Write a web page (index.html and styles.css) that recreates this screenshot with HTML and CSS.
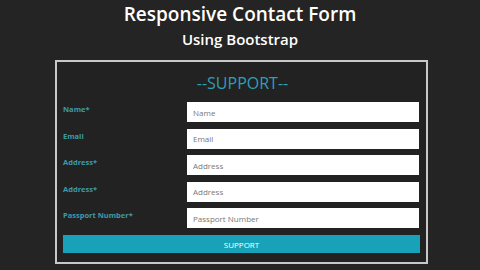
FILE: index.html
```html
<!DOCTYPE html>
<html lang="en">
<head>
    <meta charset="UTF-8">
    <meta name="viewport" content="width=device-width, initial-scale=1.0">
    <title>Responsive Contact Form</title>
    <link rel="stylesheet" href="styles.css">
</head>
<body>
    <div class="header">
        <h1>Responsive Contact Form</h1>
        <h2>Using Bootstrap</h2>
    </div>
    <div class="container">
        <h3>--SUPPORT--</h3>
        <form id="supportForm">
            <div class="row">
                <label for="name">Name*</label>
                <input type="text" id="name" placeholder="Name">
            </div>
            <div class="row">
                <label for="email">Email</label>
                <input type="text" id="email" placeholder="Email">
            </div>
            <div class="row">
                <label for="address1">Address*</label>
                <input type="text" id="address1" placeholder="Address">
            </div>
            <div class="row">
                <label for="address2">Address*</label>
                <input type="text" id="address2" placeholder="Address">
            </div>
            <div class="row">
                <label for="passport">Passport Number*</label>
                <input type="text" id="passport" placeholder="Passport Number">
            </div>
            <button type="submit">SUPPORT</button>
        </form>
    </div>
</body>
</html>
```

FILE: styles.css
```css
body {
    font-family: "Open Sans", "Noto Sans", sans-serif;
    margin: 0;
    padding: 0;
    background-color: #242424;
}

.header {
    text-align: center;
    color: #fff;
    padding-top: 2px;
}

.header h1 {
    margin: 0;
    font-size: 19px;
    font-weight: 600;
    line-height: 24px;
}

.header h2 {
    margin: 3px 0 0 0;
    font-size: 15px;
    font-weight: 600;
    line-height: 20px;
}

.container {
    margin: 11px 0 0 55px;
    border: 2px solid #c8c8c8;
    padding: 0 6px 9px 6px;
    width: 357px;
    background-color: #222;
}

.container h3 {
    margin: 10px 0 0 0;
    text-align: center;
    color: #2f9fb6;
    font-size: 16px;
    font-weight: 500;
    line-height: 22px;
    padding-left: 2px;
}

form {
    display: flex;
    flex-direction: column;
    gap: 6.5px;
    margin-top: 8px;
}

.row {
    display: flex;
    align-items: flex-start;
}

label {
    width: 124px;
    padding-top: 2px;
    color: #3e9aaa;
    font-size: 7.5px;
    font-weight: 700;
}

input[type="text"] {
    width: 232px;
    height: 20px;
    padding: 0 6px;
    border: none;
    border-radius: 0;
    box-sizing: border-box;
    font-family: inherit;
    font-size: 8px;
    background-color: #fff;
}

input::placeholder {
    color: #777;
}

button {
    margin-top: 0.5px;
    width: 357px;
    height: 18px;
    border: none;
    background-color: #17a2b8;
    color: #fff;
    font-family: inherit;
    font-size: 8px;
    cursor: pointer;
}
```
